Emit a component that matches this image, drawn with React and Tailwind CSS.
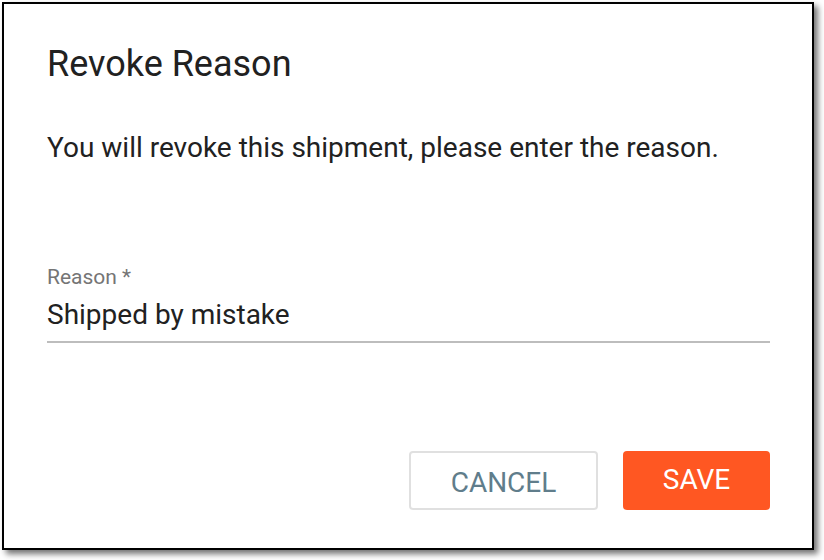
export default function App() {
    return (
        <div className="w-[824px] h-[560px] bg-white pt-[2px] pl-[2px]" style={{ fontFamily: "Roboto, 'Liberation Sans', sans-serif" }}>
            <div className="w-[812px] h-[548px] bg-white border-2 border-black shadow-[4px_4px_6px_rgba(0,0,0,0.55)] flex flex-col pl-[43px] pr-[42px]">
                <h1 className="text-[#212121] text-[36px] leading-none mt-[42px]">Revoke Reason</h1>
                <p className="text-[#212121] text-[28px] leading-none mt-[52px]">You will revoke this shipment, please enter the reason.</p>
                <div className="mt-[105px] flex flex-col">
                    <label className="text-[#757575] text-[21px] leading-none">Reason *</label>
                    <div className="text-[#212121] text-[28px] leading-none mt-[13px] pb-[12px] border-b-2 border-[#bdbdbd]">Shipped by mistake</div>
                </div>
                <div className="mt-auto mb-[38px] flex justify-end gap-[25px]">
                    <button className="w-[189px] h-[59px] border-2 border-[#e0e0e0] rounded-[4px] text-[#607d8b] text-[28px] uppercase pt-[4px]">Cancel</button>
                    <button className="w-[147px] h-[59px] bg-[#ff5722] rounded-[4px] text-white text-[28px] uppercase pb-[2px]">Save</button>
                </div>
            </div>
        </div>
    )
}
